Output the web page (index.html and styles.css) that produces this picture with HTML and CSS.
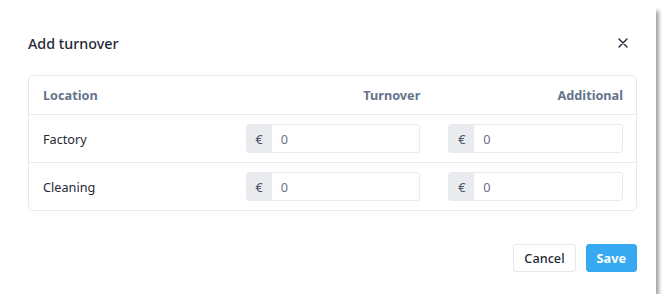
FILE: index.html
```html
<!DOCTYPE html>
<html>
<head>
<meta charset="utf-8">
<link rel="stylesheet" href="styles.css">
</head>
<body>
<div class="modal">
  <div class="modal-header">
    <h2 class="title">Add turnover</h2>
    <button class="close" aria-label="Close">
      <svg width="10" height="10" viewBox="0 0 10 10"><path d="M1 1L9 9M9 1L1 9" stroke="#1f2937" stroke-width="1.4" stroke-linecap="round"/></svg>
    </button>
  </div>
  <div class="card">
    <div class="row head">
      <div class="cell">Location</div>
      <div class="cell right">Turnover</div>
      <div class="cell right">Additional</div>
    </div>
    <div class="row">
      <div class="cell name">Factory</div>
      <div class="cell"><div class="input"><span class="addon">€</span><span class="val">0</span></div></div>
      <div class="cell"><div class="input"><span class="addon">€</span><span class="val">0</span></div></div>
    </div>
    <div class="row last">
      <div class="cell name">Cleaning</div>
      <div class="cell"><div class="input"><span class="addon">€</span><span class="val">0</span></div></div>
      <div class="cell"><div class="input"><span class="addon">€</span><span class="val">0</span></div></div>
    </div>
  </div>
  <div class="footer">
    <button class="btn cancel">Cancel</button>
    <button class="btn save">Save</button>
  </div>
</div>
</body>
</html>
```
FILE: styles.css
```css
html, body { background: #ffffff; }
body {
  margin: 8px;
  font-family: "Noto Sans", "Open Sans", sans-serif;
  color: #1f2937;
}
.modal {
  width: 648px;
  height: 286px;
  box-sizing: border-box;
  background: #fff;
  padding: 20px 19px 22px 20px;
  box-shadow: 3px 3px 4px rgba(0,0,0,0.35), 0 0 6px rgba(0,0,0,0.08);
  display: flex;
  flex-direction: column;
}
.modal-header {
  display: flex;
  align-items: center;
  justify-content: space-between;
  height: 30px;
}
.title {
  margin: 0;
  font-size: 14.3px;
  font-weight: 500;
  color: #1f2937;
}
.close {
  border: 0;
  background: none;
  padding: 0;
  margin-right: 9px;
  width: 10px;
  height: 10px;
  display: flex;
}
.card {
  margin-top: 17px;
  border: 1px solid #e5e9f0;
  border-radius: 5px;
}
.row {
  display: grid;
  grid-template-columns: 1fr 1fr 1fr;
  column-gap: 28px;
  padding: 0 13px 0 14px;
  height: 47px;
  align-items: center;
  border-top: 1px solid #e5e9f0;
  font-size: 12.7px;
}
.row.head {
  border-top: 0;
  height: 38px;
  font-weight: 700;
  color: #64748b;
}
.right { text-align: right; }
.name { color: #1f2937; }
.input {
  display: flex;
  height: 29px;
  border: 1px solid #e8ebef;
  border-radius: 3px;
  box-sizing: border-box;
  overflow: hidden;
}
.addon {
  width: 25px;
  background: #e9ebee;
  color: #4b5563;
  display: flex;
  align-items: center;
  justify-content: center;
  font-size: 12.7px;
}
.val {
  display: flex;
  align-items: center;
  padding-left: 9px;
  color: #6b7280;
  font-size: 12.7px;
}
.footer {
  margin-top: auto;
  display: flex;
  justify-content: flex-end;
  gap: 10px;
}
.btn {
  font-family: inherit;
  font-size: 12.7px;
  height: 28px;
  border-radius: 3px;
  padding: 0 10px;
  cursor: pointer;
}
.cancel {
  background: #fff;
  border: 1px solid #e5e7eb;
  color: #1f2937;
  font-weight: 500;
}
.save {
  background: #36a9f0;
  border: 1px solid #36a9f0;
  color: #fff;
  font-weight: 700;
}
```
